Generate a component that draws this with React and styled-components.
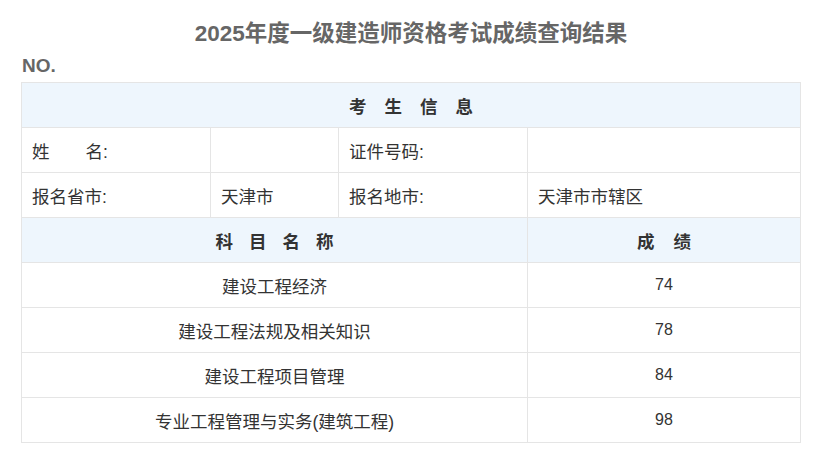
import React from "react";
import styled, { createGlobalStyle } from "styled-components";

const Global = createGlobalStyle`
  html, body { margin: 0; padding: 0; background: #fff; }
  body { font-family: "Liberation Sans", "Noto Sans CJK SC", sans-serif; color: #333; }
`;

const Page = styled.div`
  width: 823px;
  padding: 16px 0 0 21px;
  box-sizing: border-box;
`;

const Title = styled.h1`
  margin: 0;
  width: 780px;
  text-align: center;
  font-size: 22.5px;
  line-height: 36px;
  font-weight: bold;
  color: #666;
`;

const No = styled.div`
  margin: 4px 0 6px 1px;
  font-size: 19px;
  line-height: 20px;
  font-weight: bold;
  color: #666;
`;

const Grid = styled.div`
  display: grid;
  width: 780px;
  grid-template-columns: 188px 127px 188px 272px;
  grid-auto-rows: 44px;
  gap: 1px;
  padding: 1px;
  box-sizing: border-box;
  background: #e5e5e5;
`;

const Cell = styled.div`
  grid-column: span ${(p) => p.$span || 1};
  background: ${(p) => (p.$head ? "#eef6fd" : "#fff")};
  display: flex;
  align-items: center;
  justify-content: ${(p) => (p.$center ? "center" : "flex-start")};
  padding: 0 10px;
  font-size: ${(p) => (p.$num ? 16 : 17.5)}px;
  color: #333;
  font-weight: ${(p) => (p.$head ? "bold" : "normal")};
`;

const Spaced = styled.span`
  display: flex;
  gap: ${(p) => p.$gap}px;
`;

const Gap = styled.span`
  display: inline-block;
  width: ${(p) => p.$w}px;
`;

const Spread = ({ text, gap }) => (
  <Spaced $gap={gap}>
    {text.split("").map((c, i) => (
      <span key={i}>{c}</span>
    ))}
  </Spaced>
);

const subjects = [
  ["建设工程经济", "74"],
  ["建设工程法规及相关知识", "78"],
  ["建设工程项目管理", "84"],
  ["专业工程管理与实务(建筑工程)", "98"],
];

export default function App() {
  return (
    <>
      <Global />
      <Page>
        <Title>2025年度一级建造师资格考试成绩查询结果</Title>
        <No>NO.</No>
        <Grid>
          <Cell $head $center $span={4}>
            <Spread text="考生信息" gap={18} />
          </Cell>
          <Cell>
            姓<Gap $w={36} />名:
          </Cell>
          <Cell></Cell>
          <Cell>证件号码:</Cell>
          <Cell></Cell>
          <Cell>报名省市:</Cell>
          <Cell>天津市</Cell>
          <Cell>报名地市:</Cell>
          <Cell>天津市市辖区</Cell>
          <Cell $head $center $span={3}>
            <Spread text="科目名称" gap={16} />
          </Cell>
          <Cell $head $center>
            <Spread text="成绩" gap={19} />
          </Cell>
          {subjects.map(([name, score]) => (
            <React.Fragment key={name}>
              <Cell $center $span={3}>{name}</Cell>
              <Cell $center $num>{score}</Cell>
            </React.Fragment>
          ))}
        </Grid>
      </Page>
    </>
  );
}
